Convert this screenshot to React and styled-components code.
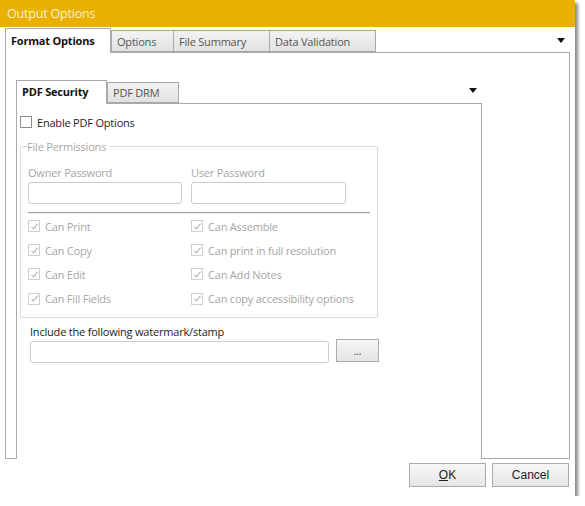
import React from "react";
import styled, { createGlobalStyle } from "styled-components";

const GlobalStyle = createGlobalStyle`
  html, body {
    margin: 0;
    padding: 0;
    background: #ffffff;
  }
  body {
    font-family: "Open Sans", "Noto Sans", sans-serif;
    font-size: 11px;
    letter-spacing: -0.2px;
    color: #222;
  }
`;

const Window = styled.div`
  width: 575px;
  height: 496px;
  background: #ffffff;
  box-shadow: 3px 3px 3px rgba(0, 0, 0, 0.45);
  display: flex;
  flex-direction: column;
`;

const TitleBar = styled.div`
  height: 27px;
  background: #e8b000;
  color: #fbf0cf;
  font-size: 12.5px;
  padding-left: 7px;
  display: flex;
  align-items: center;
  flex-shrink: 0;
`;

const Body = styled.div`
  padding: 0 5px;
  flex: 1;
  display: flex;
  flex-direction: column;
`;

const TabStrip = styled.div`
  height: ${(p) => p.$height}px;
  display: flex;
  align-items: flex-end;
  position: relative;
`;

const Tab = styled.div`
  height: ${(p) => (p.$active ? p.$h + 3 : p.$h)}px;
  padding: 0 ${(p) => p.$pad}px ${(p) => (p.$active ? 2 : 0)}px;
  width: ${(p) => p.$w}px;
  box-sizing: border-box;
  display: flex;
  align-items: center;
  border: 1px solid ${(p) => (p.$active ? "#a9a9b5" : "#a8a8a8")};
  border-bottom: ${(p) => (p.$active ? "none" : "1px solid #a8a8a8")};
  margin-right: ${(p) => (p.$active ? 0 : -1)}px;
  margin-bottom: ${(p) => (p.$active ? -1 : 0)}px;
  background: ${(p) =>
    p.$active ? "#ffffff" : "linear-gradient(#f3f3f3, #e2e2e2)"};
  color: ${(p) => (p.$active ? "#111" : "#555")};
  font-weight: ${(p) => (p.$active ? 700 : 400)};
  font-size: 11px;
  position: relative;
  z-index: ${(p) => (p.$active ? 2 : 1)};
  white-space: nowrap;
`;

const Arrow = styled.div`
  position: absolute;
  right: ${(p) => p.$right}px;
  top: ${(p) => p.$top}px;
  width: 0;
  height: 0;
  border-left: 4.5px solid transparent;
  border-right: 4.5px solid transparent;
  border-top: 5px solid #111;
`;

const OuterPage = styled.div`
  height: 407px;
  box-sizing: border-box;
  border: 1px solid #a9a9b5;
  position: relative;
  z-index: 1;
  padding: 26px 0 0 10px;
  display: flex;
  flex-direction: column;
`;

const InnerWrap = styled.div`
  width: 466px;
  flex: 1;
  display: flex;
  flex-direction: column;
  margin-bottom: -1px;
`;

const InnerPage = styled.div`
  flex: 1;
  border: 1px solid #a9a9b5;
  border-bottom: none;
  background: #fff;
  position: relative;
  z-index: 1;
  padding: 11px 0 0 3px;
`;

const CheckRow = styled.label`
  display: flex;
  align-items: center;
  height: ${(p) => p.$h || 24}px;
  color: ${(p) => (p.$disabled ? "#a6a6a6" : "#222")};
  font-size: 11px;
  white-space: nowrap;
`;

const Box = styled.span`
  width: ${(p) => p.$size}px;
  height: ${(p) => p.$size}px;
  box-sizing: border-box;
  border: 1px solid ${(p) => (p.$disabled ? "#cfcfcf" : "#8c8c8c")};
  background: #fff;
  margin-right: 5px;
  display: flex;
  align-items: center;
  justify-content: center;
  flex-shrink: 0;
`;

const GroupBox = styled.fieldset`
  margin: 10px 0 0 0;
  width: 358px;
  box-sizing: border-box;
  border: 1px solid #dcdcdc;
  border-radius: 2px;
  padding: 11px 7px 6px 7px;
  height: 179px;
`;

const Legend = styled.legend`
  color: #a6a6a6;
  font-size: 11px;
  padding: 0 3px 0 0;
  margin-left: -1px;
`;

const FieldGrid = styled.div`
  display: grid;
  grid-template-columns: 163px 1fr;
`;

const FieldLabel = styled.div`
  color: ${(p) => (p.$dim ? "#a6a6a6" : "#222")};
  font-size: 11px;
  height: 15px;
  line-height: 15px;
  margin-bottom: ${(p) => p.$mb || 3}px;
  white-space: nowrap;
`;

const TextBox = styled.div`
  width: ${(p) => p.$w}px;
  height: 22px;
  box-sizing: border-box;
  border: 1px solid #cccccc;
  border-radius: 3px;
  background: #fff;
`;

const Separator = styled.div`
  width: 342px;
  height: 0;
  border-top: 1px solid #a0a0a0;
  border-bottom: 1px solid #f0f0f0;
  margin: 8px 0 0 0;
`;

const Column = styled.div`
  display: flex;
  flex-direction: column;
`;

const WatermarkBlock = styled.div`
  padding: 6px 0 0 10px;
`;

const WatermarkRow = styled.div`
  display: flex;
  align-items: flex-start;
  gap: 7px;
`;

const SmallButton = styled.div`
  width: 43px;
  height: 23px;
  margin-top: -2px;
  box-sizing: border-box;
  border: 1px solid #acacac;
  background: linear-gradient(#f6f6f6, #e4e4e4);
  display: flex;
  align-items: center;
  justify-content: center;
  font-size: 10px;
  color: #333;
  line-height: 1;
`;

const Footer = styled.div`
  display: flex;
  justify-content: flex-end;
  gap: 6px;
  padding-top: 4px;
  padding-right: 1px;
`;

const DialogButton = styled.div`
  width: 77px;
  height: 24px;
  box-sizing: border-box;
  border: 1px solid #acacac;
  background: linear-gradient(#f7f7f7, #e6e6e6);
  display: flex;
  align-items: center;
  justify-content: center;
  font-family: "Liberation Sans", Arial, sans-serif;
  letter-spacing: 0;
  font-size: 12px;
  color: #222;
`;

const Check = () => (
  <svg width="9" height="9" viewBox="0 0 9 9">
    <path d="M1.5 4.8 L3.6 7 L7.6 1.6" fill="none" stroke="#b3b3b3" strokeWidth="1.1" />
  </svg>
);

const Perm = ({ label }) => (
  <CheckRow $disabled $h={24.2}>
    <Box $size={12} $disabled>
      <Check />
    </Box>
    {label}
  </CheckRow>
);

const outerTabs = [
  { label: "Format Options", w: 106, active: true },
  { label: "Options", w: 63 },
  { label: "File Summary", w: 97 },
  { label: "Data Validation", w: 107 },
];

const innerTabs = [
  { label: "PDF Security", w: 91, active: true },
  { label: "PDF DRM", w: 72 },
];

export default function App() {
  return (
    <>
      <GlobalStyle />
      <Window>
        <TitleBar>Output Options</TitleBar>
        <Body>
          <TabStrip $height={25}>
            {outerTabs.map((t) => (
              <Tab key={t.label} $active={t.active} $w={t.w} $h={22} $pad={5}>
                {t.label}
              </Tab>
            ))}
            <Arrow $right={5} $top={11} />
          </TabStrip>
          <OuterPage>
            <InnerWrap>
              <TabStrip $height={24}>
                {innerTabs.map((t) => (
                  <Tab key={t.label} $active={t.active} $w={t.w} $h={21} $pad={5}>
                    {t.label}
                  </Tab>
                ))}
                <Arrow $right={5} $top={9} />
              </TabStrip>
              <InnerPage>
                <CheckRow $h={14}>
                  <Box $size={12}></Box>
                  Enable PDF Options
                </CheckRow>
                <GroupBox>
                  <Legend>File Permissions</Legend>
                  <FieldGrid>
                    <Column>
                      <FieldLabel $dim $mb={2}>Owner Password</FieldLabel>
                      <TextBox $w={154} />
                    </Column>
                    <Column>
                      <FieldLabel $dim $mb={2}>User Password</FieldLabel>
                      <TextBox $w={155} />
                    </Column>
                  </FieldGrid>
                  <Separator />
                  <FieldGrid>
                    <Column>
                      <Perm label="Can Print" />
                      <Perm label="Can Copy" />
                      <Perm label="Can Edit" />
                      <Perm label="Can Fill Fields" />
                    </Column>
                    <Column>
                      <Perm label="Can Assemble" />
                      <Perm label="Can print in full resolution" />
                      <Perm label="Can Add Notes" />
                      <Perm label="Can copy accessibility options" />
                    </Column>
                  </FieldGrid>
                </GroupBox>
                <WatermarkBlock>
                  <FieldLabel $mb={2}>Include the following watermark/stamp</FieldLabel>
                  <WatermarkRow>
                    <TextBox $w={299} />
                    <SmallButton>...</SmallButton>
                  </WatermarkRow>
                </WatermarkBlock>
              </InnerPage>
            </InnerWrap>
          </OuterPage>
          <Footer>
            <DialogButton>
              <u>O</u>K
            </DialogButton>
            <DialogButton>Cancel</DialogButton>
          </Footer>
        </Body>
      </Window>
    </>
  );
}
